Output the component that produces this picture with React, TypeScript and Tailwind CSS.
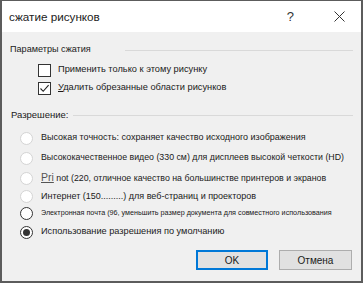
import React from 'react';

const font = { fontFamily: '"Liberation Sans", Arial, sans-serif' };

function Radio({ state }: { state: 'disabled' | 'enabled' | 'checked' }) {
  const border = state === 'disabled' ? 'border-[#d4d4d4]' : 'border-[#333333]';
  return (
    <span className={`w-[13px] h-[13px] rounded-full border ${border} bg-white flex items-center justify-center flex-shrink-0`}>
      {state === 'checked' && <span className="w-[7px] h-[7px] rounded-full bg-[#333333]" />}
    </span>
  );
}

function Checkbox({ checked }: { checked?: boolean }) {
  return (
    <span className="w-[13px] h-[13px] border border-[#333333] bg-white flex items-center justify-center flex-shrink-0">
      {checked && (
        <svg width="11" height="11" viewBox="0 0 11 11">
          <path d="M1.5 5.5 L4.2 8.3 L9.6 2.2" fill="none" stroke="#222" strokeWidth="1.1" />
        </svg>
      )}
    </span>
  );
}

export default function App() {
  const radios: { label: React.ReactNode; state: 'disabled' | 'enabled' | 'checked'; h: string; size: string }[] = [
    { label: 'Высокая точность: сохраняет качество исходного изображения', state: 'disabled', h: 'h-[20px]', size: 'text-[9px]' },
    { label: 'Высококачественное видео (330 см) для дисплеев высокой четкости (HD)', state: 'disabled', h: 'h-[20px]', size: 'text-[8.8px]' },
    {
      label: (
        <>
          <span className="underline text-[10.5px] text-[#555]">Pri</span> not (220, отличное качество на большинстве принтеров и экранов
        </>
      ),
      state: 'disabled',
      h: 'h-[20px]',
      size: 'text-[8.8px]',
    },
    { label: 'Интернет (150.........) для веб-страниц и проекторов', state: 'disabled', h: 'h-[17px]', size: 'text-[9px]' },
    {
      label: 'Электронная почта (96, уменьшить размер документа для совместного использования',
      state: 'enabled',
      h: 'h-[17px]',
      size: 'text-[7.2px]',
    },
    { label: 'Использование разрешения по умолчанию', state: 'checked', h: 'h-[20px]', size: 'text-[9.2px]' },
  ];

  return (
    <div style={font} className="w-[363px] h-[283px] flex flex-col border-t border-l-2 border-r-2 border-b-2 border-[#5c5c5c] text-[#1a1a1a] overflow-hidden">
      {/* Title bar */}
      <div className="h-[31px] bg-white flex items-center pl-[7px] flex-shrink-0">
        <span className="flex-1 text-[11.7px] text-[#222]">сжатие рисунков</span>
        <span className="text-[13px] text-[#333] mr-[40px]">?</span>
        <svg width="11" height="11" viewBox="0 0 11 11" className="mr-[16px]">
          <path d="M0.5 0.5 L10.5 10.5 M10.5 0.5 L0.5 10.5" stroke="#333" strokeWidth="1" />
        </svg>
      </div>

      {/* Body */}
      <div className="flex-1 bg-[#f0f0f0] flex flex-col pt-[12px] pr-[8px]">
        <div className="h-[12px] flex items-center pl-[8px]">
          <span className="text-[9.1px] leading-none w-[115px]">Параметры сжатия</span>
          <span className="flex-1 h-px bg-[#d9d9d9]" />
        </div>
        <div className="mt-[5px] pl-[36px] flex flex-col">
          <div className="h-[18px] flex items-center gap-[7px]">
            <Checkbox />
            <span className="text-[9.25px]">Применить только к этому рисунку</span>
          </div>
          <div className="h-[18px] flex items-center gap-[7px]">
            <Checkbox checked />
            <span className="text-[9.25px]">
              <span className="underline">У</span>далить обрезанные области рисунков
            </span>
          </div>
        </div>

        <div className="mt-[12px] h-[12px] flex items-center pl-[9px] gap-[4px]">
          <span className="text-[9.5px] leading-none">Разрешение:</span>
          <span className="flex-1 h-px bg-[#d9d9d9]" />
        </div>
        <div className="mt-[7px] pl-[18px] flex flex-col">
          {radios.map((r, i) => (
            <div key={i} className={`${r.h} flex items-center gap-[8px]`}>
              <Radio state={r.state} />
              <span className={`${r.size} whitespace-nowrap`}>{r.label}</span>
            </div>
          ))}
        </div>

        <div className="mt-[8px] flex justify-end gap-[11px] pr-[1px]">
          <button className="w-[72px] h-[20px] bg-[#e1e1e1] border-2 border-[#0078d7] text-[10px]">OK</button>
          <button className="w-[73px] h-[20px] bg-[#e1e1e1] border border-[#adadad] text-[10px]">Отмена</button>
        </div>
      </div>
    </div>
  );
}
